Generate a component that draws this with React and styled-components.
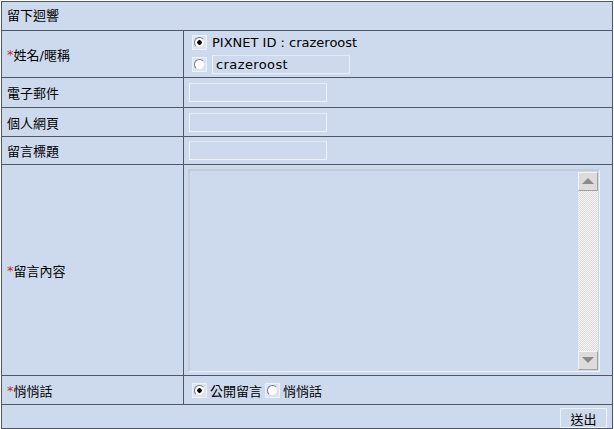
import React from 'react'
import styled, { createGlobalStyle } from 'styled-components'

const Global = createGlobalStyle`
    body {
        margin: 0;
        background: #fff;
        font-family: "DejaVu Sans", "Noto Sans CJK TC", sans-serif;
        font-size: 13px;
        color: #000;
    }
`

const Board = styled.div`
    margin: 1px 0 0 1px;
    width: 612px;
    border: 1px solid #4d5766;
    border-bottom: none;
    background: #cddaed;
    box-sizing: border-box;
`

const Title = styled.div`
    height: 28px;
    line-height: 28px;
    padding-left: 5px;
    border-bottom: 1px solid #4d5766;
`

const Row = styled.div`
    display: grid;
    grid-template-columns: 182px 1fr;
    height: ${p => p.h}px;
    border-bottom: 1px solid #4d5766;
`

const Label = styled.div`
    display: flex;
    align-items: center;
    padding-left: 5px;
    border-right: 1px solid #4d5766;
    white-space: nowrap;
`

const Star = styled.span`
    color: #c1272d;
`

const Field = styled.div`
    display: flex;
    flex-direction: ${p => (p.stack ? 'column' : 'row')};
    justify-content: ${p => (p.stack ? 'center' : 'flex-start')};
    align-items: ${p => (p.stack ? 'flex-start' : 'center')};
    padding-left: ${p => p.pl || 5}px;
    gap: ${p => p.gap || 0}px;
`

const Line = styled.label`
    display: flex;
    align-items: center;
    gap: ${p => p.gap || 5}px;
`

const Radio = styled.span`
    width: 15px;
    height: 15px;
    box-sizing: border-box;
    border: 1px solid #edf2fa;
    background: #dbe4f2;
    display: flex;
    align-items: center;
    justify-content: center;
    &::before {
        content: '';
        width: 11px;
        height: 11px;
        box-sizing: border-box;
        border-radius: 50%;
        border: 1px solid #7d7d7d;
        border-right-color: #e0e0e0;
        border-bottom-color: #e0e0e0;
        background: ${p => (p.on ? 'radial-gradient(circle, #000 0 2px, #fff 2.5px)' : '#fff')};
    }
`

const TextBox = styled.div`
    width: ${p => p.w || 138}px;
    height: 19px;
    box-sizing: border-box;
    border: 1px solid #eef3fb;
    border-top-color: #e4ebf5;
    background: #cddaed;
    padding-left: 3px;
    display: flex;
    align-items: center;
    letter-spacing: 0.4px;
`

const Area = styled.div`
    width: 412px;
    height: 203px;
    box-sizing: border-box;
    border: 1px solid #eef3fb;
    border-top: 2px solid #c3cbd6;
    border-left: 2px solid #c3cbd6;
    display: flex;
    justify-content: flex-end;
    padding: 1px 1px 1px 0;
`

const Scroll = styled.div`
    width: 20px;
    display: flex;
    flex-direction: column;
    background-color: #f4f4f4;
    background-image: conic-gradient(#dcdcdc 25%, transparent 0 50%, #dcdcdc 0 75%, transparent 0);
    background-size: 2px 2px;
`

const Arrow = styled.div`
    height: 19px;
    box-sizing: border-box;
    background: #dcdcdc;
    border: 1px solid #f4f4f4;
    border-right-color: #a0a0a0;
    border-bottom-color: #a0a0a0;
    display: flex;
    align-items: center;
    justify-content: center;
    &::before {
        content: '';
        border-left: 6px solid transparent;
        border-right: 6px solid transparent;
        ${p => (p.down ? 'border-top: 6px solid #8a8a8a;' : 'border-bottom: 6px solid #8a8a8a;')}
    }
`

const Track = styled.div`
    flex: 1;
`

const Foot = styled.div`
    height: 23px;
    display: flex;
    justify-content: flex-end;
    align-items: center;
    padding-right: 5px;
    border-bottom: 1px solid #4d5766;
`

const Send = styled.button`
    width: 47px;
    height: 20px;
    margin-top: 2px;
    border: 1px solid #eef3fb;
    background: #cddaed;
    font: inherit;
    padding: 0;
    color: #000;
`

export default function App() {
    return (
        <>
            <Global />
            <Board>
                <Title>留下迴響</Title>
                <Row h={46}>
                    <Label><Star>*</Star>姓名/暱稱</Label>
                    <Field stack pl={8} gap={5}>
                        <Line><Radio on />PIXNET ID : crazeroost</Line>
                        <Line><Radio /><TextBox>crazeroost</TextBox></Line>
                    </Field>
                </Row>
                <Row h={29}>
                    <Label>電子郵件</Label>
                    <Field><TextBox /></Field>
                </Row>
                <Row h={28}>
                    <Label>個人網頁</Label>
                    <Field><TextBox /></Field>
                </Row>
                <Row h={27}>
                    <Label>留言標題</Label>
                    <Field><TextBox /></Field>
                </Row>
                <Row h={210}>
                    <Label><Star>*</Star>留言內容</Label>
                    <Field pl={4}>
                        <Area>
                            <Scroll>
                                <Arrow />
                                <Track />
                                <Arrow down />
                            </Scroll>
                        </Area>
                    </Field>
                </Row>
                <Row h={28}>
                    <Label><Star>*</Star>悄悄話</Label>
                    <Field pl={8}>
                        <Line gap={3}><Radio on />公開留言</Line>
                        <Line gap={3} style={{ marginLeft: 3 }}><Radio />悄悄話</Line>
                    </Field>
                </Row>
                <Foot>
                    <Send>送出</Send>
                </Foot>
            </Board>
        </>
    )
}
